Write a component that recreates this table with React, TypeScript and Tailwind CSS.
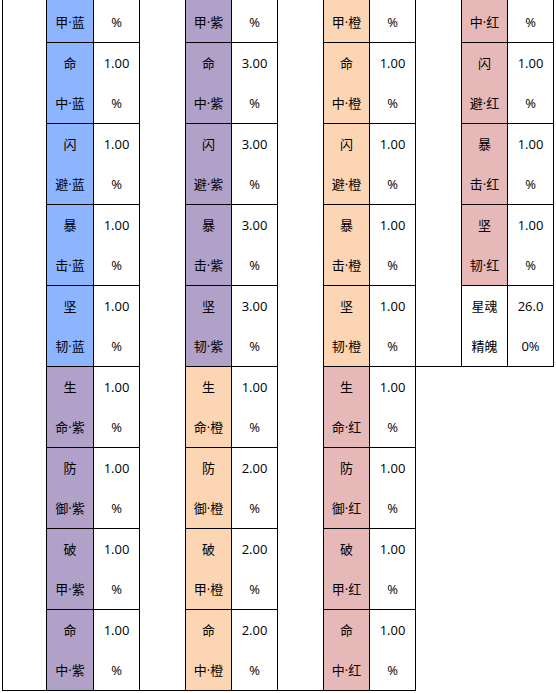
import React from "react";

type Row = { k1: string; k2: string; v1: string; v2: string; bg: string };

const BLUE = "bg-[#8db4ff]";
const PURPLE = "bg-[#b1a0c7]";
const ORANGE = "bg-[#fcd5b4]";
const RED = "bg-[#e6b8b7]";
const WHITE = "bg-white";

const stat = (k: string, v: string, bg: string): Row => ({
  k1: k.slice(0, 1),
  k2: k.slice(1),
  v1: v,
  v2: "%",
  bg,
});

interface Group {
  top: { label: string; bg: string };
  rows: Row[];
}

const groups: Group[] = [
  {
    top: { label: "甲·蓝", bg: BLUE },
    rows: [
      stat("命中·蓝", "1.00", BLUE),
      stat("闪避·蓝", "1.00", BLUE),
      stat("暴击·蓝", "1.00", BLUE),
      stat("坚韧·蓝", "1.00", BLUE),
      stat("生命·紫", "1.00", PURPLE),
      stat("防御·紫", "1.00", PURPLE),
      stat("破甲·紫", "1.00", PURPLE),
      stat("命中·紫", "1.00", PURPLE),
    ],
  },
  {
    top: { label: "甲·紫", bg: PURPLE },
    rows: [
      stat("命中·紫", "3.00", PURPLE),
      stat("闪避·紫", "3.00", PURPLE),
      stat("暴击·紫", "3.00", PURPLE),
      stat("坚韧·紫", "3.00", PURPLE),
      stat("生命·橙", "1.00", ORANGE),
      stat("防御·橙", "2.00", ORANGE),
      stat("破甲·橙", "2.00", ORANGE),
      stat("命中·橙", "2.00", ORANGE),
    ],
  },
  {
    top: { label: "甲·橙", bg: ORANGE },
    rows: [
      stat("命中·橙", "1.00", ORANGE),
      stat("闪避·橙", "1.00", ORANGE),
      stat("暴击·橙", "1.00", ORANGE),
      stat("坚韧·橙", "1.00", ORANGE),
      stat("生命·红", "1.00", RED),
      stat("防御·红", "1.00", RED),
      stat("破甲·红", "1.00", RED),
      stat("命中·红", "1.00", RED),
    ],
  },
  {
    top: { label: "中·红", bg: RED },
    rows: [
      stat("闪避·红", "1.00", RED),
      stat("暴击·红", "1.00", RED),
      stat("坚韧·红", "1.00", RED),
      { k1: "星魂", k2: "精魄", v1: "26.0", v2: "0%", bg: WHITE },
    ],
  },
];

function Cell({ lines, bg, first }: { lines: string[]; bg: string; first?: boolean }) {
  return (
    <div
      className={`${first ? "w-[47px]" : "w-[46px]"} shrink-0 border-r border-black ${bg} flex flex-col items-center justify-center`}
    >
      {lines.map((l, i) => (
        <div key={i} className="h-[40px] leading-[40px] whitespace-nowrap">
          {l}
        </div>
      ))}
    </div>
  );
}

function GroupBlock({ group, first }: { group: Group; first: boolean }) {
  return (
    <div className="flex items-stretch self-start">
      {/* blank spacer column */}
      <div
        className={
          first
            ? "w-[45px] shrink-0 border-l border-r border-b border-black"
            : "w-[46px] shrink-0 border-r border-b border-black"
        }
      />
      <div className="flex flex-col">
        <div className="flex h-[43px] border-b border-black">
          <div
            className={`${first ? "w-[47px]" : "w-[46px]"} shrink-0 border-r border-black ${group.top.bg} flex items-end justify-center`}
          >
            <div className="h-[40px] leading-[40px]">{group.top.label}</div>
          </div>
          <div className="w-[46px] shrink-0 border-r border-black bg-white flex items-end justify-center">
            <div className="h-[40px] leading-[40px]">%</div>
          </div>
        </div>
        {group.rows.map((r, i) => (
          <div key={i} className="flex h-[81px] border-b border-black">
            <Cell lines={[r.k1, r.k2]} bg={r.bg} first={first} />
            <Cell lines={[r.v1, r.v2]} bg="bg-white" />
          </div>
        ))}
      </div>
    </div>
  );
}

export default function App() {
  return (
    <div className="w-[556px] h-[693px] overflow-hidden bg-white pl-[2px] flex items-start font-['Open_Sans','Noto_Sans_CJK_SC',sans-serif] text-[13px] text-black">
      {groups.map((g, i) => (
        <GroupBlock key={i} group={g} first={i === 0} />
      ))}
    </div>
  );
}
